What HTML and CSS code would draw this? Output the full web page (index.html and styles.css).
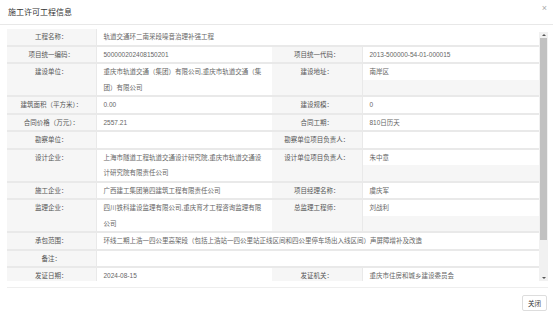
FILE: index.html
```html
<!DOCTYPE html>
<html lang="zh-CN">
  <head>
    <meta charset="UTF-8" />
    <meta name="viewport" content="width=device-width, initial-scale=1.0" />
    <title>施工许可工程信息</title>
    <link rel="stylesheet" href="styles.css">
  </head>
  <body>
    <div class="modal">
      <div class="modal-header">
        <h3>施工许可工程信息</h3>
        <span class="close">&times;</span>
      </div>

      <div class="modal-body">
        <div class="scroll-box">
          <div class="viewport">
            <table class="info-table">
              <colgroup>
                <col class="c-label1">
                <col class="c-value">
                <col class="c-label2">
                <col>
              </colgroup>
              <tr>
                <td class="label">工程名称：</td>
                <td colspan="3"><div class="val">轨道交通环二南采段噪音治理补强工程</div></td>
              </tr>
              <tr>
                <td class="label">项目统一编码：</td>
                <td><div class="val">500000202408150201</div></td>
                <td class="label">项目统一代码：</td>
                <td><div class="val">2013-500000-54-01-000015</div></td>
              </tr>
              <tr>
                <td class="label">建设单位：</td>
                <td><div class="val">重庆市轨道交通（集团）有限公司,重庆市轨道交通（集团）有限公司</div></td>
                <td class="label">建设地址：</td>
                <td><div class="val">南岸区</div></td>
              </tr>
              <tr>
                <td class="label">建筑面积（平方米）：</td>
                <td><div class="val">0.00</div></td>
                <td class="label">建设规模：</td>
                <td><div class="val">0</div></td>
              </tr>
              <tr>
                <td class="label">合同价格（万元）：</td>
                <td><div class="val">2557.21</div></td>
                <td class="label">合同工期：</td>
                <td><div class="val">810日历天</div></td>
              </tr>
              <tr>
                <td class="label">勘察单位：</td>
                <td><div class="val"></div></td>
                <td class="label">勘察单位项目负责人：</td>
                <td><div class="val"></div></td>
              </tr>
              <tr>
                <td class="label">设计企业：</td>
                <td><div class="val">上海市隧道工程轨道交通设计研究院,重庆市轨道交通设计研究院有限责任公司</div></td>
                <td class="label">设计单位项目负责人：</td>
                <td><div class="val">朱中意</div></td>
              </tr>
              <tr>
                <td class="label">施工企业：</td>
                <td><div class="val">广西建工集团第四建筑工程有限责任公司</div></td>
                <td class="label">项目经理名称：</td>
                <td><div class="val">虞庆军</div></td>
              </tr>
              <tr>
                <td class="label">监理企业：</td>
                <td><div class="val">四川铁科建设监理有限公司,重庆育才工程咨询监理有限公司</div></td>
                <td class="label">总监理工程师：</td>
                <td><div class="val">刘战利</div></td>
              </tr>
              <tr>
                <td class="label">承包范围：</td>
                <td colspan="3"><div class="val">环线二期上浩一四公里高架段（包括上浩站一四公里站正线区间和四公里停车场出入线区间）声屏障增补及改造</div></td>
              </tr>
              <tr>
                <td class="label">备注：</td>
                <td colspan="3"><div class="val"></div></td>
              </tr>
              <tr>
                <td class="label">发证日期：</td>
                <td><div class="val">2024-08-15</div></td>
                <td class="label">发证机关：</td>
                <td><div class="val">重庆市住房和城乡建设委员会</div></td>
              </tr>
            </table>
          </div>
          <div class="scrollbar">
            <span class="arrow up"></span>
            <span class="track"><span class="thumb"></span></span>
            <span class="arrow down"></span>
          </div>
        </div>
      </div>

      <div class="modal-footer">
        <button type="button" class="btn">关闭</button>
      </div>
    </div>
  </body>
</html>
```

FILE: styles.css
```css
* {
    margin: 0;
    padding: 0;
    box-sizing: border-box;
}

body {
    background: #fff;
    font-family: "Liberation Sans", "Noto Sans CJK SC", sans-serif;
    color: #555;
}

.modal {
    width: 553px;
    height: 316px;
    display: flex;
    flex-direction: column;
}

.modal-header {
    height: 25px;
    display: flex;
    align-items: center;
    justify-content: space-between;
    padding: 0 6px 2px 8px;
    border-bottom: 1px solid #e8e8e8;
}

.modal-header h3 {
    font-size: 8px;
    font-weight: normal;
    color: #333;
}

.modal-header .close {
    font-size: 9px;
    color: #aaa;
    line-height: 1;
    margin-top: -6px;
}

.modal-body {
    padding: 4px 5px 6px 7px;
}

.scroll-box {
    height: 252px;
    display: flex;
}

.viewport {
    flex: 1;
    overflow: hidden;
}

.info-table {
    width: 100%;
    border-collapse: collapse;
    table-layout: fixed;
    font-size: 6.5px;
    background: #f6f6f6;
}

.info-table .c-label1 { width: 89px; }
.info-table .c-value { width: 176px; }
.info-table .c-label2 { width: 90px; }

.info-table td {
    vertical-align: top;
    line-height: 15.5px;
    border-bottom: 2px solid #e9e9e9;
}

.info-table td.label {
    text-align: center;
    color: #555;
    border-right: 1px solid #e9e9e9;
    white-space: nowrap;
}

.info-table .val {
    background: #fff;
    min-height: 15.5px;
    padding: 0 7px;
    color: #666;
}

.scrollbar {
    width: 9px;
    margin-top: 3px;
    display: flex;
    flex-direction: column;
    background: #f1f1f1;
}

.scrollbar .arrow {
    height: 6px;
    display: flex;
    justify-content: center;
    align-items: center;
}

.scrollbar .arrow::before {
    content: "";
    border-left: 2px solid transparent;
    border-right: 2px solid transparent;
}

.scrollbar .up::before {
    border-bottom: 2px solid #555;
}

.scrollbar .down::before {
    border-top: 2px solid #555;
}

.scrollbar .track {
    flex: 1;
    padding: 0 1px;
}

.scrollbar .thumb {
    display: block;
    height: 202px;
    background: #c1c1c1;
}

.modal-footer {
    margin: 0 5px 0 7px;
    border-top: 1px solid #eee;
    padding: 7px 1px 0 0;
    display: flex;
    justify-content: flex-end;
}

.btn {
    width: 25px;
    height: 16px;
    font-family: "Liberation Sans", "Noto Sans CJK SC", sans-serif;
    font-size: 6.5px;
    color: #333;
    background: #fff;
    border: 1px solid #ddd;
    border-radius: 2px;
}
```
